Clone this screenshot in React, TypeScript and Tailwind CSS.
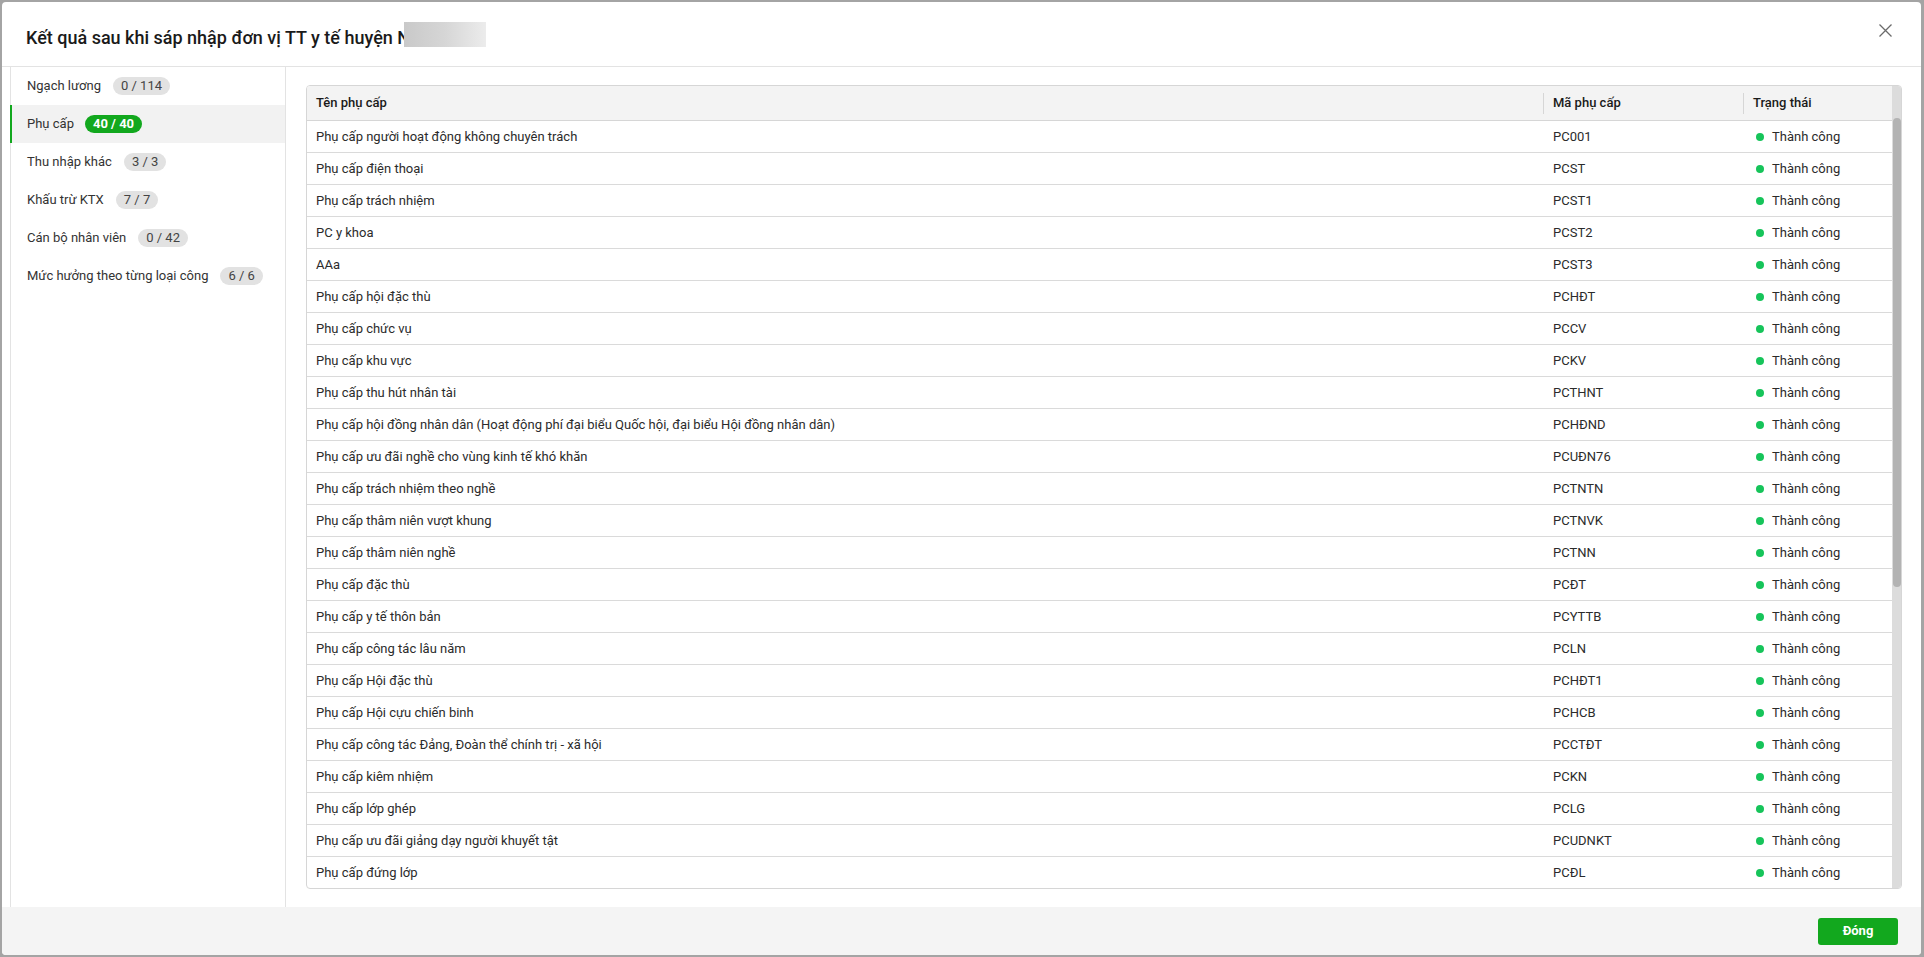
import React from "react";

const rows: [string, string][] = [
  ["Phụ cấp người hoạt động không chuyên trách", "PC001"],
  ["Phụ cấp điện thoại", "PCST"],
  ["Phụ cấp trách nhiệm", "PCST1"],
  ["PC y khoa", "PCST2"],
  ["AAa", "PCST3"],
  ["Phụ cấp hội đặc thù", "PCHĐT"],
  ["Phụ cấp chức vụ", "PCCV"],
  ["Phụ cấp khu vực", "PCKV"],
  ["Phụ cấp thu hút nhân tài", "PCTHNT"],
  ["Phụ cấp hội đồng nhân dân (Hoạt động phí đại biểu Quốc hội, đại biểu Hội đồng nhân dân)", "PCHĐND"],
  ["Phụ cấp ưu đãi nghề cho vùng kinh tế khó khăn", "PCUĐN76"],
  ["Phụ cấp trách nhiệm theo nghề", "PCTNTN"],
  ["Phụ cấp thâm niên vượt khung", "PCTNVK"],
  ["Phụ cấp thâm niên nghề", "PCTNN"],
  ["Phụ cấp đặc thù", "PCĐT"],
  ["Phụ cấp y tế thôn bản", "PCYTTB"],
  ["Phụ cấp công tác lâu năm", "PCLN"],
  ["Phụ cấp Hội đặc thù", "PCHĐT1"],
  ["Phụ cấp Hội cựu chiến binh", "PCHCB"],
  ["Phụ cấp công tác Đảng, Đoàn thể chính trị - xã hội", "PCCTĐT"],
  ["Phụ cấp kiêm nhiệm", "PCKN"],
  ["Phụ cấp lớp ghép", "PCLG"],
  ["Phụ cấp ưu đãi giảng dạy người khuyết tật", "PCUDNKT"],
  ["Phụ cấp đứng lớp", "PCĐL"],
];

const tabs: { label: string; badge: string; active?: boolean }[] = [
  { label: "Ngạch lương", badge: "0 / 114" },
  { label: "Phụ cấp", badge: "40 / 40", active: true },
  { label: "Thu nhập khác", badge: "3 / 3" },
  { label: "Khấu trừ KTX", badge: "7 / 7" },
  { label: "Cán bộ nhân viên", badge: "0 / 42" },
  { label: "Mức hưởng theo từng loại công", badge: "6 / 6" },
];

export default function App() {
  return (
    <div
      className="w-full h-[957px] bg-[#a4a4a4] pt-[2px] pl-[2px] overflow-hidden"
      style={{ fontFamily: "Roboto, 'Noto Sans', 'Liberation Sans', sans-serif" }}
    >
      <div className="w-[1919px] h-[953px] bg-white rounded-[4px] flex flex-col overflow-hidden">
        {/* Header */}
        <div className="h-[65px] shrink-0 border-b border-[#e3e3e3] flex justify-between">
          <div className="pl-[24px] pt-[24px] flex items-start">
            <span className="text-[18px] leading-[24px] font-medium text-[#1a1a1a] whitespace-nowrap">
              Kết quả sau khi sáp nhập đơn vị TT y tế huyện N
            </span>
            <span className="ml-[-6px] mt-[-4px] w-[82px] h-[25px] bg-gradient-to-r from-[#c9c9c9] via-[#d6d6d6] to-[#ececec]" />
          </div>
          <div className="pt-[22px] pr-[29px]">
            <svg width="13" height="13" viewBox="0 0 13 13">
              <path d="M0.5 0.5 L12.5 12.5 M12.5 0.5 L0.5 12.5" stroke="#6b6b6b" strokeWidth="1.3" fill="none" />
            </svg>
          </div>
        </div>

        {/* Body */}
        <div className="flex-1 flex min-h-0">
          {/* Sidebar */}
          <div className="ml-[8px] w-[276px] shrink-0 border-l border-r border-[#e3e3e3] flex flex-col">
            {tabs.map((t) => (
              <div
                key={t.label}
                className={
                  t.active
                    ? "h-[38px] -ml-px flex items-center pl-[15px] bg-[#f2f2f2] border-l-2 border-[#12a81e]"
                    : "h-[38px] flex items-center pl-[16px]"
                }
              >
                <span className="text-[13px] text-[#333333] whitespace-nowrap">{t.label}</span>
                {t.active ? (
                  <span className="ml-[11px] h-[18px] px-[8px] rounded-full bg-[#12a81e] text-white text-[13px] font-bold leading-[18px]">
                    {t.badge}
                  </span>
                ) : (
                  <span className="ml-[12px] h-[18px] px-[8px] rounded-full bg-[#e2e2e2] text-[#444444] text-[13px] leading-[18px]">
                    {t.badge}
                  </span>
                )}
              </div>
            ))}
          </div>

          {/* Content */}
          <div className="flex-1 min-w-0 pt-[18px] pb-[18px] pl-[20px] pr-[19px] flex">
            <div className="flex-1 flex border border-[#d6d6d6] rounded-[4px] overflow-hidden">
              <div className="flex-1 flex flex-col min-w-0">
                <div className="h-[35px] shrink-0 flex items-center bg-[#f3f3f3] border-b border-[#d6d6d6] text-[13px] font-medium text-[#1a1a1a]">
                  <div className="w-[1236px] pl-[9px]">Tên phụ cấp</div>
                  <div className="w-px h-[21px] bg-[#d6d6d6]" />
                  <div className="w-[199px] pl-[9px]">Mã phụ cấp</div>
                  <div className="w-px h-[21px] bg-[#d6d6d6]" />
                  <div className="flex-1 pl-[9px]">Trạng thái</div>
                </div>
                <div className="flex-1 overflow-hidden">
                  {rows.map(([name, code], i) => (
                    <div
                      key={code + i}
                      className={
                        "h-[32px] flex items-center text-[13px] text-[#2b2b2b] " +
                        (i === rows.length - 1 ? "" : "border-b border-[#dadada]")
                      }
                    >
                      <div className="w-[1236px] pl-[9px] whitespace-nowrap">{name}</div>
                      <div className="w-[200px] pl-[10px]">{code}</div>
                      <div className="flex-1 pl-[13px] flex items-center">
                        <span className="w-[8px] h-[8px] rounded-full bg-[#16c45a]" />
                        <span className="ml-[8px]">Thành công</span>
                      </div>
                    </div>
                  ))}
                </div>
              </div>
              {/* Scrollbar */}
              <div className="w-[9px] shrink-0 bg-[#dcdcdc] flex flex-col">
                <div className="h-[32px]" />
                <div className="h-[469px] mx-[0.5px] rounded-[4px] bg-[#b3b3b3]" />
              </div>
            </div>
          </div>
        </div>

        {/* Footer */}
        <div className="h-[48px] shrink-0 bg-[#f4f4f4] flex items-center justify-end pr-[23px]">
          <button className="w-[80px] h-[27px] rounded-[3px] bg-[#12a81e] text-white text-[13px] font-bold">
            Đóng
          </button>
        </div>
      </div>
    </div>
  );
}
